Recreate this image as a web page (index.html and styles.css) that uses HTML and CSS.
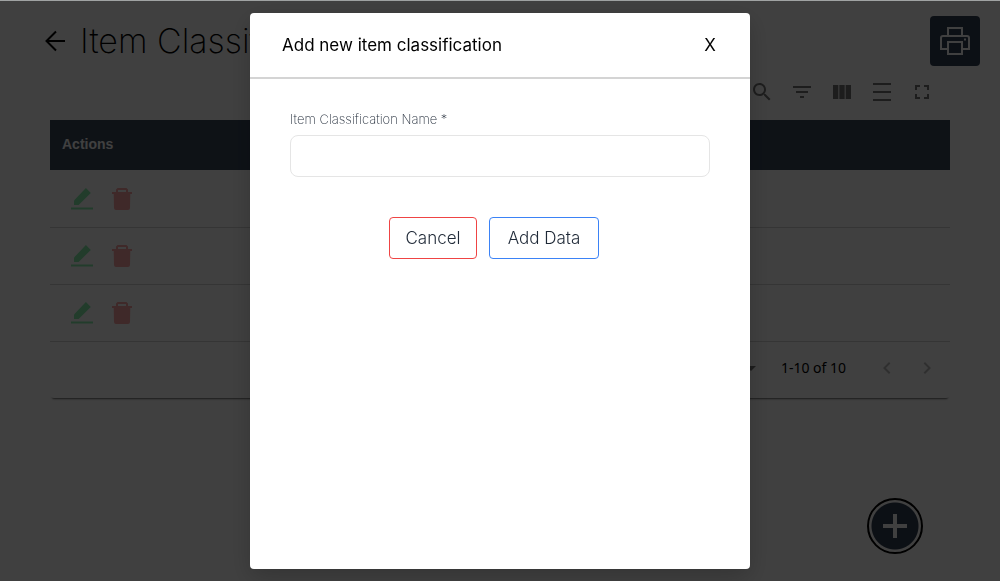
FILE: index.html
```html
<!DOCTYPE html>
<html lang="en">
<head>
<meta charset="utf-8">
<meta name="viewport" content="width=device-width, initial-scale=1">
<title>Item Classification</title>
<link rel="stylesheet" href="styles.css">
</head>
<body>
<svg class="sprite" aria-hidden="true">
  <symbol id="edit" viewBox="0 0 24 24"><path d="M4 18v-4.400L15.900 1 20.800 5.900 8.600 18z"/><path d="M1 20.500h22v2H1z"/></symbol>
  <symbol id="trash" viewBox="0 0 24 24"><path fill-rule="evenodd" d="M7.500 1h9l1.500 1.500V5h4v2h-1.700l-.3 14q0 2-2 2H6q-2 0-2-2L3.700 7H2V5h4V2.500zM8 3v2h8V3z"/></symbol>
</svg>
<main class="page">
  <header class="page-header">
    <a class="back" href="#" aria-label="Back">
      <svg width="24" height="24" viewBox="0 0 24 24" fill="none" stroke="currentColor" stroke-width="2"><path d="M22 12H3.500M13 2.500 3.500 12l9.500 9.500"/></svg>
    </a>
    <h1 class="page-title">Item Classification</h1>
    <button class="print" type="button" aria-label="Print">
      <svg width="32" height="32" viewBox="0 0 32 32" fill="none" stroke="currentColor" stroke-width="2"><path d="M9 11V3h14v8M9 24H2V13q0-2 2-2h24q2 0 2 2v11h-7M9 17h14v12H9z"/><path d="M25 14.500h2"/></svg>
    </button>
  </header>
  <section class="content">
    <div class="toolbar">
      <button class="tool" type="button" aria-label="Search"><svg viewBox="0 0 24 24"><path d="M15.500 14h-.79l-.28-.27C15.410 12.590 16 11.110 16 9.500 16 5.910 13.090 3 9.500 3S3 5.910 3 9.500 5.910 16 9.500 16c1.610 0 3.090-.59 4.230-1.570l.27.28v.79l5 4.990L20.490 19l-4.990-5zm-6 0C7.010 14 5 11.990 5 9.500S7.010 5 9.500 5 14 7.010 14 9.500 11.990 14 9.500 14z"/></svg></button>
      <button class="tool" type="button" aria-label="Filter"><svg viewBox="0 0 24 24"><path d="M10 18h4v-2h-4zM3 6v2h18V6zm3 7h12v-2H6z"/></svg></button>
      <button class="tool" type="button" aria-label="Columns"><svg viewBox="0 0 24 24"><path d="M14.670 5v14H9.330V5zm1 14H21V5h-5.330zm-7.340 0V5H3v14z"/></svg></button>
      <button class="tool" type="button" aria-label="Density"><svg viewBox="0 0 24 24"><path d="M3 3h18v2H3zM3 11h18v2H3zM3 19h18v2H3z"/></svg></button>
      <button class="tool" type="button" aria-label="Full screen"><svg viewBox="0 0 24 24"><path d="M7 14H5v5h5v-2H7zM5 10h2V7h3V5H5zm12 7h-3v2h5v-5h-2zM14 5v2h3v3h2V5z"/></svg></button>
    </div>
    <div class="card">
      <table class="grid">
        <thead><tr><th scope="col">Actions</th></tr></thead>
        <tbody>
          <tr><td><div class="actions"><button class="act edit" type="button" aria-label="Edit"><svg><use href="#edit"/></svg></button><button class="act delete" type="button" aria-label="Delete"><svg><use href="#trash"/></svg></button></div></td></tr>
          <tr><td><div class="actions"><button class="act edit" type="button" aria-label="Edit"><svg><use href="#edit"/></svg></button><button class="act delete" type="button" aria-label="Delete"><svg><use href="#trash"/></svg></button></div></td></tr>
          <tr><td><div class="actions"><button class="act edit" type="button" aria-label="Edit"><svg><use href="#edit"/></svg></button><button class="act delete" type="button" aria-label="Delete"><svg><use href="#trash"/></svg></button></div></td></tr>
        </tbody>
      </table>
      <div class="pager">
        <button class="caret" type="button" aria-label="Rows per page"><svg viewBox="0 0 24 24"><path d="M7 10l5 5 5-5z"/></svg></button>
        <span class="range">1-10 of 10</span>
        <button class="tool step" type="button" aria-label="Previous page" disabled><svg viewBox="0 0 24 24"><path d="M15.410 7.410 14 6l-6 6 6 6 1.410-1.410L10.830 12z"/></svg></button>
        <button class="tool step" type="button" aria-label="Next page" disabled><svg viewBox="0 0 24 24"><path d="M10 6 8.590 7.410 13.170 12l-4.580 4.590L10 18l6-6z"/></svg></button>
      </div>
    </div>
  </section>
  <button class="fab" type="button" aria-label="Add">
    <svg width="24" height="24" viewBox="0 0 24 24"><path d="M10 0h4v10h10v4H14v10h-4V14H0v-4h10z"/></svg>
  </button>
</main>
<div class="overlay">
  <div class="dialog" role="dialog" aria-modal="true" aria-labelledby="dialog-title">
    <header class="dialog-header">
      <h2 class="dialog-title" id="dialog-title">Add new item classification</h2>
      <button class="close" type="button">X</button>
    </header>
    <form class="form">
      <label class="label" for="name">Item Classification Name *</label>
      <input class="input" id="name" type="text">
      <div class="buttons">
        <button class="btn cancel" type="button">Cancel</button>
        <button class="btn add" type="submit">Add Data</button>
      </div>
    </form>
  </div>
</div>
</body>
</html>
```
FILE: styles.css
```css
* { box-sizing: border-box; }
body {
  margin: 0;
  background: #fff;
  color: #000;
  font-family: Inter, "Open Sans", sans-serif;
}
button { margin: 0; padding: 0; border: 0; background: none; font: inherit; color: inherit; }
svg { display: block; fill: currentColor; }
.sprite { position: absolute; width: 0; height: 0; }

.page { min-height: 100vh; border-top: 1px solid #a0a3a3; overflow: hidden; }
.page-header { display: flex; align-items: center; gap: 13px; padding: 15px 20px 0 43px; }
.back { color: #000; }
.back svg, .print svg { fill: none; }
.page-title { flex: 1; margin: 0; font-size: 34px; line-height: 48px; font-weight: 200; white-space: nowrap; }
.print {
  display: grid;
  place-items: center;
  width: 50px;
  height: 50px;
  border-radius: 4px;
  background: #334155;
  color: #fff;
}
.content { padding: 6px 50px 0; }
.toolbar { display: flex; justify-content: flex-end; padding: 0 8px 8px; }
.tool { display: grid; place-items: center; width: 40px; height: 40px; color: #757575; }
.tool svg { width: 24px; height: 24px; }
.card { border-radius: 4px; box-shadow: 0 3px 2px -2px #0009; }
.grid { width: 100%; border-collapse: collapse; }
.grid th {
  height: 50px;
  padding: 0 12px 2px;
  background: #38485a;
  color: #fff;
  font: bold 14px "Liberation Sans", sans-serif;
  text-align: left;
}
.grid td { height: 57px; padding: 1px 20px 0; border-bottom: 1px solid #d4d4d4; }
.actions { display: flex; gap: 16px; }
.act svg { width: 24px; height: 24px; }
.edit { color: #86efac; }
.delete { color: #fca5a5; }
.pager { display: flex; align-items: center; justify-content: flex-end; height: 56px; padding: 0 3px 4px; }
.caret { color: #757575; }
.caret svg { width: 24px; height: 24px; }
.range { padding: 0 21px 0 18px; font: 14px "Noto Sans", sans-serif; }
.step { color: #bdbdbd; }
.fab {
  position: fixed;
  right: 77px;
  bottom: 27px;
  display: grid;
  place-items: center;
  width: 56px;
  height: 56px;
  border: 2px solid #000;
  border-radius: 50%;
  background: radial-gradient(circle, #334155 23px, #fff 24px);
  color: #fff;
}

.overlay {
  position: fixed;
  inset: 1px 0 0;
  display: flex;
  justify-content: center;
  padding: 12px 0;
  background: rgba(0, 0, 0, .75);
}
.dialog { width: 50%; border-radius: 4px; background: #fff; box-shadow: 0 8px 24px #0003; }
.dialog-header {
  display: flex;
  align-items: center;
  justify-content: space-between;
  height: 66px;
  padding: 0 32px;
  border-bottom: 2px solid #d4d4d4;
}
.dialog-title { margin: 0; font-size: 17px; line-height: 24px; font-weight: 400; }
.close { width: 16px; font-size: 17px; line-height: 24px; }
.form { padding: 32px 40px; }
.label { display: block; margin-bottom: 8px; font-size: 13px; line-height: 16px; font-weight: 200; color: #1f2937; }
.input {
  display: block;
  width: 100%;
  height: 42px;
  padding: 0 12px;
  border: 1px solid #e5e5e5;
  border-radius: 8px;
  font: inherit;
}
.buttons { display: flex; justify-content: center; gap: 12px; margin-top: 40px; padding-right: 12px; }
.btn { height: 42px; border: 1px solid; border-radius: 4px; font-size: 17px; font-weight: 300; color: #1f2937; }
.cancel { width: 88px; border-color: #ef4444; }
.add { width: 110px; border-color: #3b82f6; }
```
